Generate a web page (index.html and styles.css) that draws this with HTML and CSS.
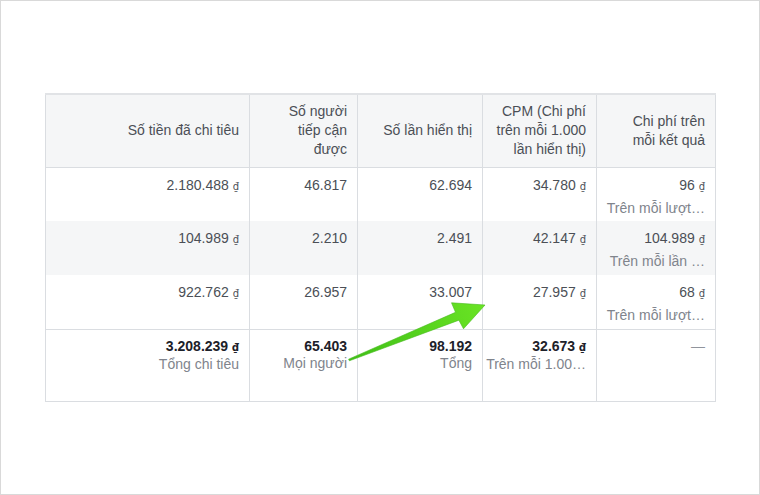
FILE: index.html
```html
<!DOCTYPE html>
<html lang="vi">
<head>
<meta charset="utf-8">
<link rel="stylesheet" href="styles.css">
</head>
<body>
<div class="frame">
  <div class="wrap">
    <table class="report">
      <colgroup>
        <col class="c1"><col class="c2"><col class="c3"><col class="c4"><col class="c5">
      </colgroup>
      <thead>
        <tr>
          <th>Số tiền đã chi tiêu</th>
          <th>Số người<br>tiếp cận<br>được</th>
          <th>Số lần hiển thị</th>
          <th>CPM (Chi phí<br>trên mỗi 1.000<br>lần hiển thị)</th>
          <th>Chi phí trên<br>mỗi kết quả</th>
        </tr>
      </thead>
      <tbody>
        <tr>
          <td>2.180.488 <span class="cur">₫</span></td>
          <td>46.817</td>
          <td>62.694</td>
          <td>34.780 <span class="cur">₫</span></td>
          <td>96 <span class="cur">₫</span><div class="sub">Trên mỗi lượt…</div></td>
        </tr>
        <tr class="alt">
          <td>104.989 <span class="cur">₫</span></td>
          <td>2.210</td>
          <td>2.491</td>
          <td>42.147 <span class="cur">₫</span></td>
          <td>104.989 <span class="cur">₫</span><div class="sub">Trên mỗi lần …</div></td>
        </tr>
        <tr>
          <td>922.762 <span class="cur">₫</span></td>
          <td>26.957</td>
          <td>33.007</td>
          <td>27.957 <span class="cur">₫</span></td>
          <td>68 <span class="cur">₫</span><div class="sub">Trên mỗi lượt…</div></td>
        </tr>
      </tbody>
      <tfoot>
        <tr>
          <td><b>3.208.239 <span class="cur">₫</span></b><div class="sub">Tổng chi tiêu</div></td>
          <td><b>65.403</b><div class="sub">Mọi người</div></td>
          <td><b>98.192</b><div class="sub">Tổng</div></td>
          <td class="wide"><b>32.673 <span class="cur">₫</span></b><div class="sub">Trên mỗi 1.00…</div></td>
          <td><span class="dash">—</span></td>
        </tr>
      </tfoot>
    </table>
    <svg class="arrow" width="760" height="495" viewBox="0 0 760 495">
      <defs>
        <linearGradient id="g" x1="349" y1="360" x2="485" y2="305" gradientUnits="userSpaceOnUse">
          <stop offset="0" stop-color="#3fbf16"/>
          <stop offset="1" stop-color="#6ae424"/>
        </linearGradient>
      </defs>
      <polygon fill="url(#g)" stroke="#45b81c" stroke-width="0.6" stroke-linejoin="round" points="348.6,359.2 455.5,312.3 451.5,302.8 485,305 463.5,328.8 458.9,320.2 349.4,360.8"/>
    </svg>
  </div>
</div>
</body>
</html>
```

FILE: styles.css
```css
html, body {
  margin: 0;
  padding: 0;
  background: #ffffff;
}
.frame {
  box-sizing: border-box;
  width: 760px;
  height: 495px;
  border: 1px solid #d9d9d9;
  padding: 92px 0 0 44px;
  font-family: "Liberation Sans", Arial, sans-serif;
}
.wrap {
  position: relative;
  width: 670px;
}
.report {
  border-collapse: collapse;
  table-layout: fixed;
  width: 670px;
  font-size: 14px;
  color: #4b4f56;
  border: 1px solid #dadde1;
  border-top: 2px solid #e1e3e6;
}
.c1 { width: 204px; }
.c2 { width: 108px; }
.c3 { width: 125px; }
.c4 { width: 114px; }
.c5 { width: 119px; }
.report th {
  background: #f5f6f7;
  font-weight: normal;
  text-align: right;
  vertical-align: middle;
  line-height: 19px;
  height: 73px;
  box-sizing: border-box;
  padding: 0 10px 0 6px;
  border-left: 1px solid #dadde1;
  border-bottom: 1px solid #dadde1;
  color: #4b4f56;
}
.report td {
  text-align: right;
  vertical-align: top;
  line-height: 19px;
  height: 54px;
  box-sizing: border-box;
  padding: 8px 10px 0 6px;
  border-left: 1px solid #dadde1;
  white-space: nowrap;
}
.report tr.alt td {
  background: #f5f6f7;
}
.report tfoot td {
  height: 72px;
  padding-top: 7px;
  border-top: 1px solid #dadde1;
}
.report tfoot td.wide {
  padding-left: 1px;
}
.report tfoot b {
  color: #1d2129;
}
.cur {
  font-family: "DejaVu Sans", sans-serif;
  font-size: 10px;
}
.sub {
  color: #80848c;
  white-space: nowrap;
  margin-top: 3px;
}
.report tfoot .sub {
  margin-top: -2px;
}
.dash {
  color: #90949c;
}
.arrow {
  position: absolute;
  left: -45px;
  top: -93px;
  pointer-events: none;
}
```
